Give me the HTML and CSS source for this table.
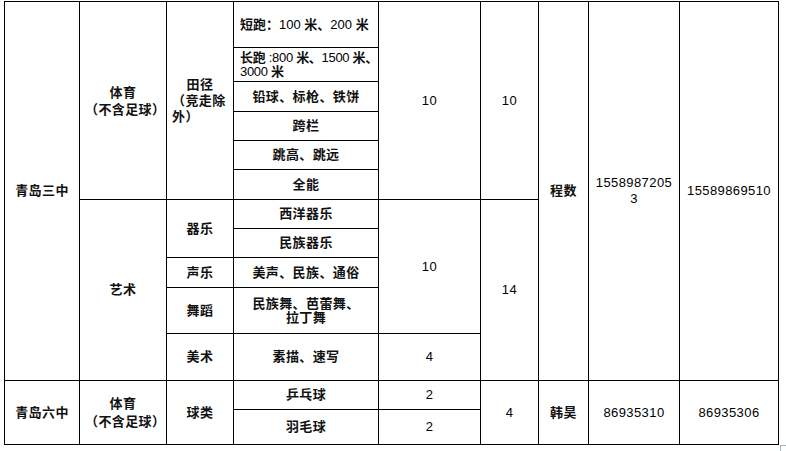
FILE: index.html
```html
<!DOCTYPE html>
<html lang="zh-CN">
<head>
<meta charset="utf-8">
<title>招生项目表</title>
<link rel="stylesheet" href="styles.css">
</head>
<body>
<div class="page">
<table class="grid">
  <colgroup>
    <col class="c1"><col class="c2"><col class="c3"><col class="c4"><col class="c5">
    <col class="c6"><col class="c7"><col class="c8"><col class="c9">
  </colgroup>
  <tbody>
    <tr class="h46">
      <td rowspan="11">青岛三中</td>
      <td rowspan="6" class="lh17">体育<br>（不含足球）</td>
      <td rowspan="6" class="track"><div class="tc">田径</div><div class="tl">（竞走除外）</div></td>
      <td class="left">短跑：<span class="num">100 </span>米、<span class="num">200 </span>米</td>
      <td rowspan="6" class="num">10</td>
      <td rowspan="6" class="num">10</td>
      <td rowspan="11">程数</td>
      <td rowspan="11" class="num">1558987205<br>3</td>
      <td rowspan="11" class="num">15589869510</td>
    </tr>
    <tr class="h34"><td class="left lh14 tight">长跑 <span class="num">:800 </span>米、<span class="num">1500 </span>米、<br><span class="num">3000 </span>米</td></tr>
    <tr class="h30"><td>铅球、标枪、铁饼</td></tr>
    <tr class="h29"><td>跨栏</td></tr>
    <tr class="h29"><td>跳高、跳远</td></tr>
    <tr class="h30"><td>全能</td></tr>
    <tr class="h29">
      <td rowspan="5">艺术</td>
      <td rowspan="2">器乐</td>
      <td>西洋器乐</td>
      <td rowspan="4" class="num">10</td>
      <td rowspan="5" class="num">14</td>
    </tr>
    <tr class="h29"><td>民族器乐</td></tr>
    <tr class="h30"><td>声乐</td><td>美声、民族、通俗</td></tr>
    <tr class="h46"><td>舞蹈</td><td class="lh14">民族舞、芭蕾舞、<br>拉丁舞</td></tr>
    <tr class="h47"><td>美术</td><td>素描、速写</td><td class="num">4</td></tr>
    <tr class="h29">
      <td rowspan="2">青岛六中</td>
      <td rowspan="2" class="lh18">体育<br>（不含足球）</td>
      <td rowspan="2">球类</td>
      <td>乒乓球</td>
      <td class="num">2</td>
      <td rowspan="2" class="num">4</td>
      <td rowspan="2">韩昊</td>
      <td rowspan="2" class="num">86935310</td>
      <td rowspan="2" class="num">86935306</td>
    </tr>
    <tr class="h35"><td>羽毛球</td><td class="num">2</td></tr>
  </tbody>
</table>
<span class="end-mark"></span>
</div>
</body>
</html>
```
FILE: styles.css
```css
html, body {
  margin: 0;
  padding: 0;
  background: #ffffff;
}

.page {
  position: relative;
  width: 786px;
  height: 451px;
  overflow: hidden;
}

.grid {
  border-collapse: collapse;
  table-layout: fixed;
  width: 775px;
  margin: 1px 0 0 4px;
  font-family: "Liberation Sans", "Noto Sans CJK SC", sans-serif;
  font-size: 13px;
  font-weight: bold;
  letter-spacing: 0.4px;
  color: #111;
}

.c1 { width: 75px; }
.c2 { width: 87px; }
.c3 { width: 67px; }
.c4 { width: 145px; }
.c5 { width: 102px; }
.c6 { width: 58px; }
.c7 { width: 50px; }
.c8 { width: 91px; }
.c9 { width: 99px; }

.grid td {
  border: 1px solid #000;
  padding: 0 5px;
  text-align: center;
  vertical-align: middle;
  line-height: 16px;
  overflow: hidden;
}

.grid .num {
  font-weight: normal;
  color: #000;
}

.h29 { height: 29px; }
.h30 { height: 30px; }
.h34 { height: 34px; }
.h35 { height: 35px; }
.h46 { height: 46px; }
.h47 { height: 47px; }

.grid td.left {
  text-align: left;
  letter-spacing: 0;
  padding: 0 1px 0 6px;
  white-space: nowrap;
}
.grid td.tight { letter-spacing: -0.3px; }
.grid td.lh14 { line-height: 14px; }
.grid td.lh17 { line-height: 17px; }
.grid td.lh18 { line-height: 18px; }

.tc { text-align: center; }
.tl { text-align: left; }

.end-mark {
  position: absolute;
  left: 780px;
  top: 445px;
  width: 5px;
  height: 6px;
  border: 1px solid #9cb6d6;
  border-bottom: none;
}
```
